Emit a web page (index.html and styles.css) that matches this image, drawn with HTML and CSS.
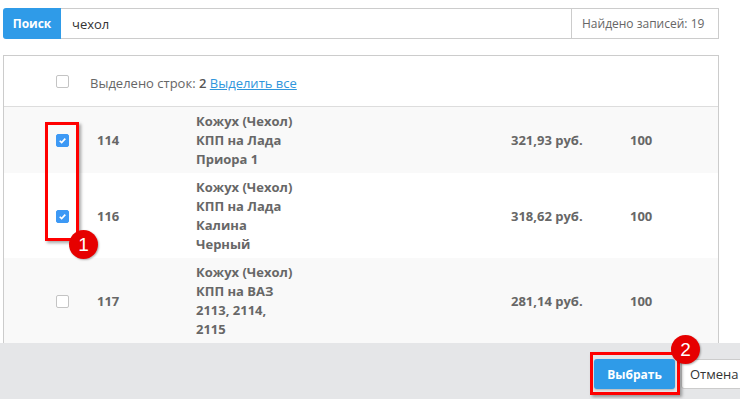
FILE: index.html
```html
<!DOCTYPE html>
<html lang="ru">

<head>
    <meta charset="UTF-8">
    <title>Выбор товара</title>
    <link rel="stylesheet" href="styles.css">
</head>

<body>

    <div id="page">
        <div id="main">
            <div class="search">
                <div class="search-btn">Поиск</div>
                <div class="search-input">чехол</div>
                <div class="search-count">Найдено записей: 19</div>
            </div>

            <div class="list">
                <div class="list-head">
                    <span class="cb"></span>
                    <span class="head-text">Выделено строк: <b>2</b> <a href="#">Выделить все</a></span>
                </div>

                <div class="row odd">
                    <span class="cell-cb"><span class="cb checked"><svg viewBox="0 0 13 13"><path d="M3.2 6.8 L5.5 9 L9.8 4.3" /></svg></span></span>
                    <span class="cell-id">114</span>
                    <span class="cell-name"><span>Кожух (Чехол) КПП на Лада Приора 1</span></span>
                    <span class="cell-price">321,93 руб.</span>
                    <span class="cell-qty">100</span>
                </div>
                <div class="row">
                    <span class="cell-cb"><span class="cb checked"><svg viewBox="0 0 13 13"><path d="M3.2 6.8 L5.5 9 L9.8 4.3" /></svg></span></span>
                    <span class="cell-id">116</span>
                    <span class="cell-name"><span>Кожух (Чехол) КПП на Лада Калина Черный</span></span>
                    <span class="cell-price">318,62 руб.</span>
                    <span class="cell-qty">100</span>
                </div>
                <div class="row odd">
                    <span class="cell-cb"><span class="cb"></span></span>
                    <span class="cell-id">117</span>
                    <span class="cell-name"><span>Кожух (Чехол) КПП на ВАЗ 2113, 2114, 2115</span></span>
                    <span class="cell-price">281,14 руб.</span>
                    <span class="cell-qty">100</span>
                </div>
            </div>
        </div>

        <div id="footer">
            <div class="btn btn-primary">Выбрать</div>
            <div class="btn btn-cancel">Отмена</div>
        </div>

        <!-- пометки поверх скриншота -->
        <div class="mark mark-1"></div>
        <div class="badge badge-1">1</div>
        <div class="mark mark-2"></div>
        <div class="badge badge-2">2</div>
    </div>

</body>

</html>
```

FILE: styles.css
```css
* {
    box-sizing: border-box;
}

body {
    margin: 0;
    background: #fff;
    font-family: "Open Sans", "Liberation Sans", sans-serif;
    font-size: 13px;
    color: #666;
    overflow: hidden;
}

#page {
    position: relative;
    width: 740px;
    height: 399px;
}

#main {
    height: 343px;
    overflow: hidden;
    padding: 8px 21px 0 3px;
}

.search {
    display: flex;
    height: 31px;
}

.search-btn {
    width: 58px;
    background: #2f9be8;
    color: #fff;
    font-size: 12px;
    font-weight: 700;
    border-radius: 3px 0 0 3px;
    display: flex;
    align-items: center;
    justify-content: center;
}

.search-input {
    flex: 1;
    border: 1px solid #ccc;
    border-left: none;
    padding-left: 11px;
    display: flex;
    align-items: center;
    color: #333;
}

.search-count {
    width: 147px;
    border: 1px solid #ccc;
    border-left: none;
    padding-left: 10px;
    display: flex;
    align-items: center;
    font-size: 12px;
    color: #666;
}

.list {
    margin-top: 16px;
    border: 1px solid #ccc;
    border-bottom: none;
}

.list-head {
    height: 51px;
    display: flex;
    align-items: center;
    padding-left: 52px;
    border-bottom: 1px solid #ddd;
}

.head-text {
    margin-left: 21px;
    padding-top: 3px;
}

.head-text b {
    font-weight: 600;
    color: #555;
}

.head-text a {
    color: #2f96dc;
}

.cb {
    display: inline-block;
    width: 13px;
    height: 13px;
    border: 1px solid #c4c4c4;
    border-radius: 2px;
    background: #fff;
}

.cb.checked {
    border-color: #3d99f5;
    background: #3d99f5;
}

.cb svg {
    display: block;
    width: 11px;
    height: 11px;
}

.cb svg path {
    fill: none;
    stroke: #fff;
    stroke-width: 2;
}

.row {
    display: grid;
    grid-template-columns: 52px 41px 99px 315px 119px 1fr;
    align-items: center;
    padding: 5px 0 4px 0;
    line-height: 19px;
    font-weight: 700;
    color: #676767;
}

.row.odd {
    background: #f9f9f9;
}

.cell-cb {
    grid-column: 2;
    display: flex;
}

.cell-name span {
    display: block;
    width: 100px;
}

#footer {
    height: 56px;
    background: #e5e6e8;
    display: flex;
    padding: 16px 0 0 594px;
    gap: 6px;
}

.btn {
    height: 30px;
    display: flex;
    align-items: center;
    border-radius: 3px;
    flex-shrink: 0;
}

.btn-primary {
    width: 81px;
    justify-content: center;
    background: #2f9be8;
    color: #fff;
    font-size: 12px;
    font-weight: 700;
    box-shadow: 0 1px 2px rgba(0, 0, 0, 0.2);
}

.btn-cancel {
    width: 72px;
    padding-left: 8px;
    background: #fff;
    border: 1px solid #ccc;
    color: #333;
}

.mark {
    position: absolute;
    border: 3px solid #f00;
    box-shadow: 2px 2px 3px rgba(0, 0, 0, 0.35);
}

.mark-1 {
    left: 45px;
    top: 122px;
    width: 34px;
    height: 119px;
}

.mark-2 {
    left: 590px;
    top: 352px;
    width: 90px;
    height: 43px;
}

.badge {
    position: absolute;
    width: 29px;
    height: 29px;
    border-radius: 50%;
    background: #e60000;
    color: #fff;
    font-family: "Liberation Sans", Arial, sans-serif;
    font-size: 19px;
    display: flex;
    align-items: center;
    justify-content: center;
    box-shadow: 1px 1px 2px rgba(0, 0, 0, 0.3);
}

.badge-1 {
    left: 69px;
    top: 230px;
}

.badge-2 {
    left: 671px;
    top: 335px;
}
```
